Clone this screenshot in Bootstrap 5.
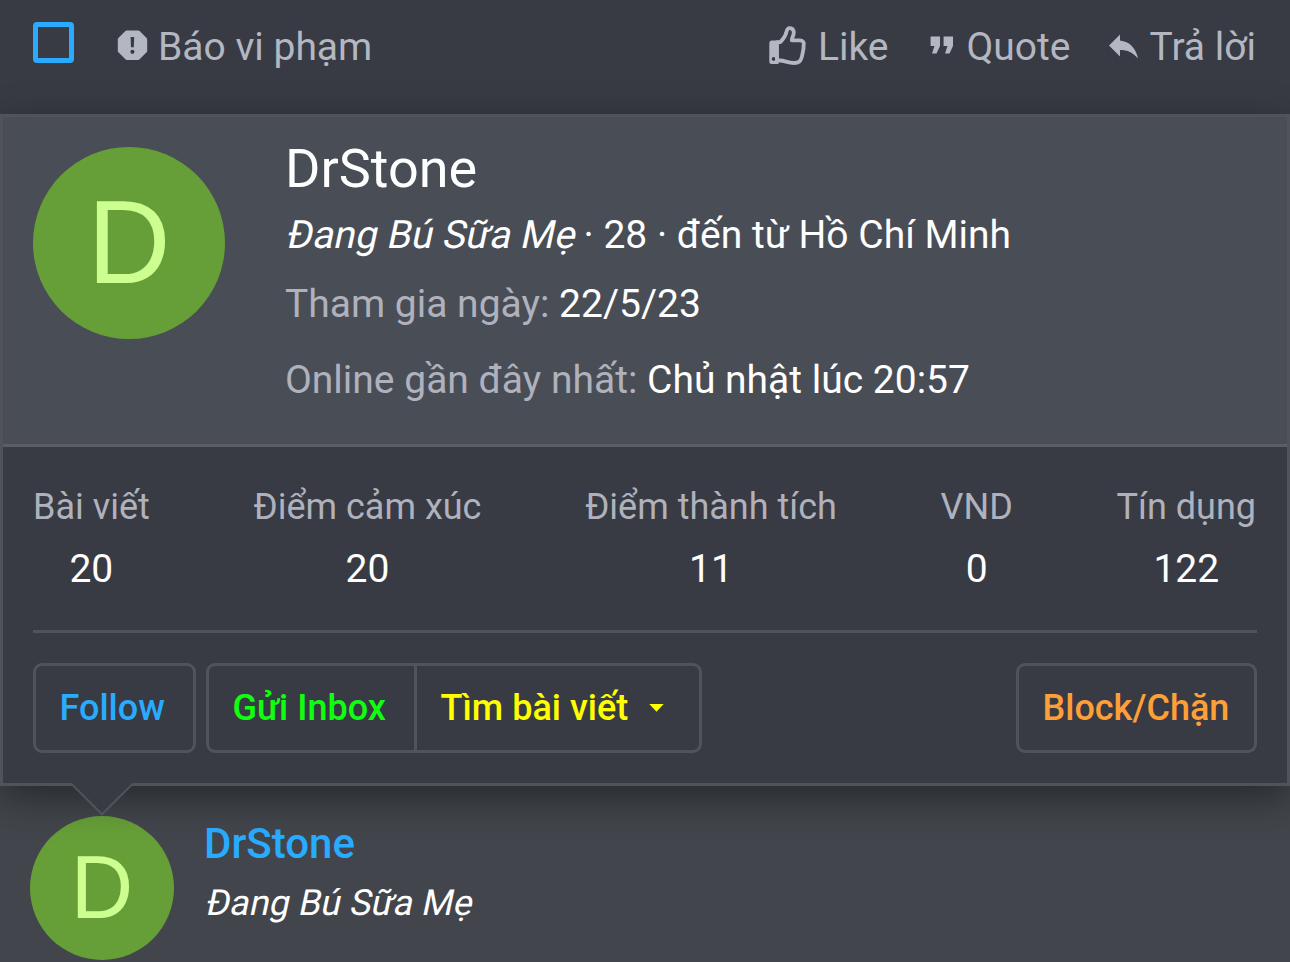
<!DOCTYPE html>
<html lang="vi">
<head>
<meta charset="utf-8">
<title>DrStone</title>
<meta name="viewport" content="width=device-width, initial-scale=1">
<link href="https://cdn.jsdelivr.net/npm/bootstrap@5.3.0/dist/css/bootstrap.min.css" rel="stylesheet">
<style>
body{font-family:Roboto,"Noto Sans",sans-serif;font-size:39px;line-height:54px;color:#fefefe;background:#42464c;height:962px;overflow:hidden}
.post-actions{height:114px;padding:20px 34px 0 33px;background:#383b43;color:#b3b7c2}
.pick{width:41px;height:41px;border:5px solid #29abff;border-radius:4px;margin-top:2px}
.act{line-height:54px;white-space:nowrap}
.act-report{margin-left:43px}.act-quote{margin-left:41px}.act-reply{margin-left:38px}
.member-card{height:672px;background:#383b43;border:3px solid #505359;border-radius:0;box-shadow:0 12px 36px rgba(0,0,0,.42);color:inherit;z-index:2}
.member-head{height:330px;background:#494d56;border-bottom:3px solid #5a5d64;padding:30px}
.member-info{margin-left:60px}
.ava{border-radius:50%;background:#669f38;color:#ccff90;flex:none;text-align:center;font-family:"Liberation Sans",sans-serif}
.ava span{display:inline-block;transform:scaleY(1.04)}
.ava-l{width:192px;height:192px;font-size:115px;line-height:189px}
.ava-m{width:144px;height:144px;font-size:86.4px;line-height:142px}
.who{font-size:54px;line-height:60px;margin-top:-8px}
.slant{display:inline-block;font-style:normal;transform:skewX(-12deg);transform-origin:0 76%}
.dim{color:#afb2bd}
.stat-row{padding:36px 31px 0 30px;height:183px}
.stat-row dt{font-size:36px;line-height:48px;font-weight:400;color:#afb2bd}
.stat-row dd{line-height:54px;margin:11px 0 0}
.rule{height:3px;background:#505359;margin:0 30px}
.acts{padding:30px 30px 0}
.acts .btn{--bs-btn-font-weight:500;font-size:36px;line-height:54px;height:90px;border:3px solid #505359;border-radius:9px;padding:15px 0 15px 23.5px;white-space:nowrap;text-align:left;flex:none}
.w-follow{width:163px}.w-inbox{width:211px}.w-find{width:288px}.w-block{width:241px}
.c-blue{color:#29abff}.c-green{color:#10ff10}.c-yellow{color:#ffff00}.c-orange{color:#ff9f38}
.acts .btn-group{margin-left:10px}
.acts .btn-group .btn:first-child{border-radius:9px 0 0 9px}
.acts .btn-group .btn:last-child{border-radius:0 9px 9px 0;margin-left:-3px}
.tip{position:absolute;left:66px;top:666px;z-index:3}
.author{padding:30px 30px 0}
.author-text{margin-left:30px}
.author-name{font-size:42px;font-weight:500;line-height:54px;margin-top:1px}
.author-title{font-size:36px;line-height:54px;margin-top:5px}
svg{display:block;flex:none}
</style>
</head>
<body>
<div class="post-actions d-flex align-items-start">
  <div class="pick"></div>
  <div class="act act-report d-flex">
    <svg width="31" height="31" viewBox="0 0 31 31" style="margin:10px 10px 0 0"><path fill="#b3b7c2" d="M9.800.5h11.400a2 2 0 0 1 1.400.6l7 7a2 2 0 0 1 .6 1.400v11.400a2 2 0 0 1-.6 1.400l-7 7a2 2 0 0 1-1.400.6H9.800a2 2 0 0 1-1.400-.6l-7-7a2 2 0 0 1-.6-1.400V9.500a2 2 0 0 1 .6-1.400l7-7A2 2 0 0 1 9.800.5z"/><path fill="#383b43" d="M13.600 7h3.600l-.4 10.200h-2.800z"/><circle cx="15.400" cy="21.800" r="2.100" fill="#383b43"/></svg>
    <span>Báo vi phạm</span>
  </div>
  <div class="act d-flex ms-auto">
    <svg width="38" height="40" viewBox="0 0 38 40" style="margin:6px 11px 0 0"><path fill="#b3b7c2" fill-rule="evenodd" d="M2.500 14.500h7v23.500H2.500Q.3 38 .3 35.800V17Q.3 14.500 2.500 14.500zM4.600 31a1.900 1.900 0 1 0 0 3.800A1.900 1.900 0 0 0 4.600 31z"/><path d="M8 16.200h3.200C13.500 13.800 16.500 10 17.300 6.500 18 3 19 1.900 21.300 2.200c3.500.5 4.200 4 2.700 7.800-.5 1.300-1.200 2.400-1.200 4.300h7.800c3.500 0 4.700 2.200 4 5-.3 1 .2 2-.2 4-.6 1.500-.2 2.200-.8 4-.5 1.500-.3 2.200-.8 3.700-1.200 3.900-2.500 6-7.800 6-5.500 0-9.500-2.300-13.500-2.500H8z" fill="none" stroke="#b3b7c2" stroke-width="3.800" stroke-linejoin="round"/></svg>
    <span>Like</span>
  </div>
  <div class="act act-quote d-flex">
    <svg width="24" height="19" viewBox="0 0 24 19" style="margin:16px 13px 0 0"><path fill="#b3b7c2" d="M.6.5H10v9.500L6.500 17.500H2L4.500 10H.6zM13.600.5H23V10l-3.500 7.500H15L17.500 10h-3.900z"/></svg>
    <span>Quote</span>
  </div>
  <div class="act act-reply d-flex">
    <svg width="30" height="26" viewBox="0 0 30 26" style="margin:14px 11px 0 0"><path fill="#b3b7c2" d="M0 11.500 11 .5v6C20.500 7.500 27 14 29 24.500 24 18.500 18.500 16 11 16v6.500z"/></svg>
    <span>Trả lời</span>
  </div>
</div>

<main class="position-relative">
  <section class="card member-card">
    <header class="member-head d-flex">
      <div class="ava ava-l"><span>D</span></div>
      <div class="member-info text-nowrap">
        <div class="who">DrStone</div>
        <div style="margin-top:9px"><em class="slant">Đang Bú Sữa Mẹ</em> · 28 · đến từ Hồ Chí Minh</div>
        <div style="margin-top:15px"><span class="dim">Tham gia ngày:</span> 22/5/23</div>
        <div style="margin-top:22px"><span class="dim">Online gần đây nhất:</span> Chủ nhật lúc 20:57</div>
      </div>
    </header>
    <div class="stat-row d-flex justify-content-between text-center">
      <dl class="m-0"><dt>Bài viết</dt><dd>20</dd></dl>
      <dl class="m-0"><dt>Điểm cảm xúc</dt><dd>20</dd></dl>
      <dl class="m-0"><dt>Điểm thành tích</dt><dd>11</dd></dl>
      <dl class="m-0"><dt>VND</dt><dd>0</dd></dl>
      <dl class="m-0"><dt>Tín dụng</dt><dd>122</dd></dl>
    </div>
    <div class="rule"></div>
    <div class="acts d-flex">
      <button class="btn c-blue w-follow">Follow</button>
      <div class="btn-group">
        <button class="btn c-green w-inbox">Gửi Inbox</button>
        <button class="btn c-yellow w-find d-flex align-items-center">Tìm bài viết
          <svg width="15" height="8" viewBox="0 0 15 8" style="margin-left:21px"><path fill="#ffff00" d="M.3 0h14.400L7.500 7.800z"/></svg>
        </button>
      </div>
      <button class="btn c-orange w-block ms-auto">Block/Chặn</button>
    </div>
    <svg class="tip" width="66" height="34" viewBox="0 0 66 34"><path fill="#383b43" d="M1.500 0h63L33 31z"/><path d="M1.500 0L33 31.300 64.500 0" fill="none" stroke="#505359" stroke-width="2"/></svg>
  </section>
  <section class="author d-flex">
    <div class="ava ava-m"><span>D</span></div>
    <div class="author-text">
      <div class="author-name c-blue">DrStone</div>
      <div class="author-title"><em class="slant">Đang Bú Sữa Mẹ</em></div>
    </div>
  </section>
</main>
<script src="https://cdn.jsdelivr.net/npm/bootstrap@5.3.0/dist/js/bootstrap.bundle.min.js"></script>
</body>
</html>
